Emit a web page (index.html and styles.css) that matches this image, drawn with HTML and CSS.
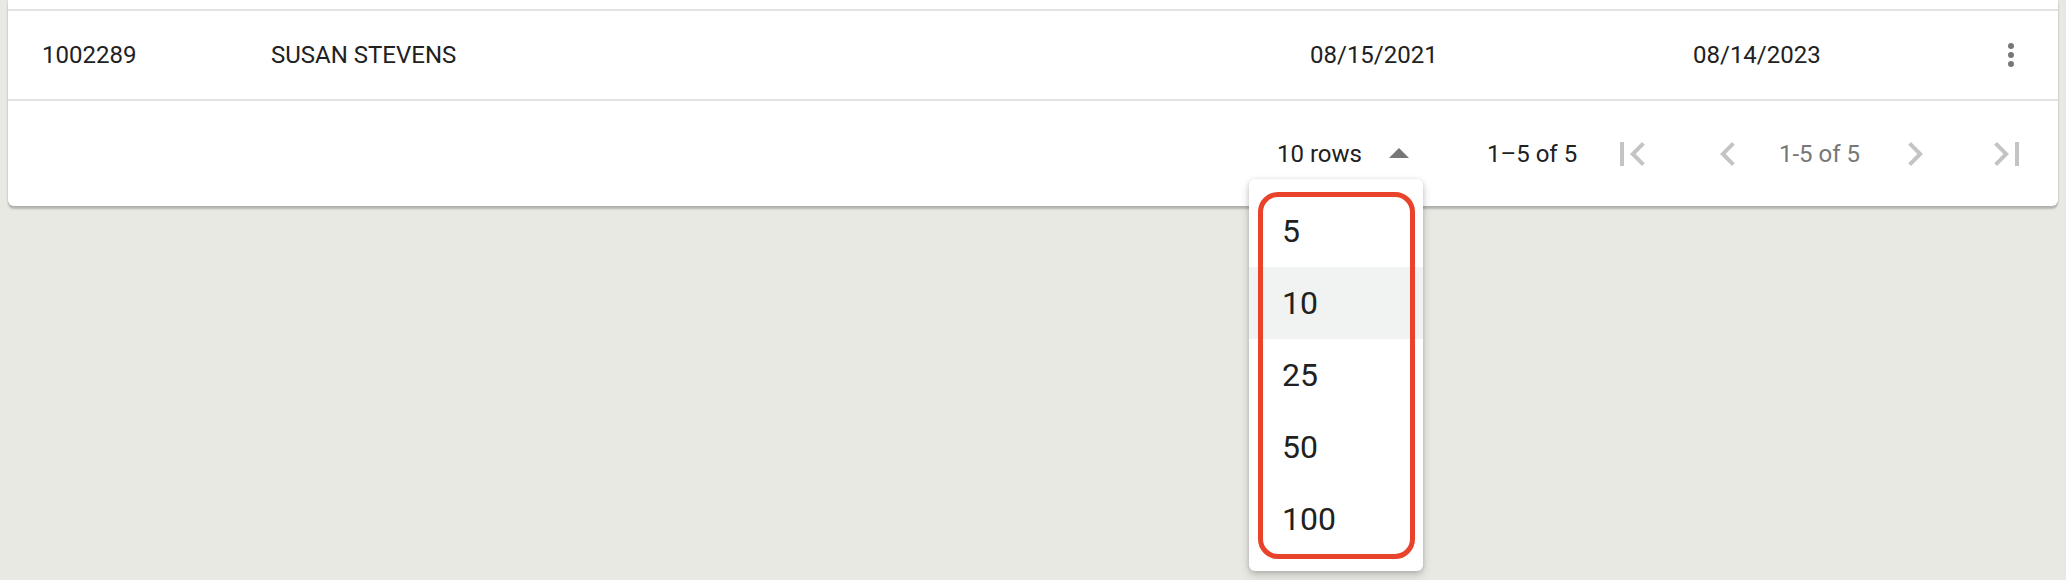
FILE: index.html
```html
<!DOCTYPE html>
<html lang="en">
<head>
<meta charset="utf-8">
<title>Table pagination</title>
<link rel="stylesheet" href="styles.css">
</head>
<body>
<div class="card">
  <div class="row-prev"></div>
  <div class="row">
    <div class="cell">1002289</div>
    <div class="cell">SUSAN STEVENS</div>
    <div class="cell">08/15/2021</div>
    <div class="cell">08/14/2023</div>
    <div class="cell actions">
      <svg class="kebab" viewBox="0 0 24 24" width="36" height="36"><circle cx="12" cy="6" r="2"/><circle cx="12" cy="12" r="2"/><circle cx="12" cy="18" r="2"/></svg>
    </div>
  </div>
  <div class="footer">
    <div class="rows-select">
      <span class="rows-label">10 rows</span>
      <span class="icon-btn">
        <svg class="drop" viewBox="0 0 24 24" width="48" height="48"><path d="M7 14l5-5 5 5z"/></svg>
      </span>
      <div class="menu">
        <div class="menu-item">5</div>
        <div class="menu-item selected">10</div>
        <div class="menu-item">25</div>
        <div class="menu-item">50</div>
        <div class="menu-item">100</div>
        <div class="ring"></div>
      </div>
    </div>
    <span class="range">1–5 of 5</span>
    <span class="icon-btn first">
      <svg class="nav" viewBox="0 0 24 24" width="48" height="48"><path d="M18.41 16.59L13.82 12l4.59-4.59L17 6l-6 6 6 6zM6 6h2v12H6z"/></svg>
    </span>
    <span class="icon-btn prev">
      <svg class="nav" viewBox="0 0 24 24" width="48" height="48"><path d="M15.41 7.41L14 6l-6 6 6 6 1.41-1.41L10.83 12z"/></svg>
    </span>
    <span class="page-text">1-5 of 5</span>
    <span class="icon-btn next">
      <svg class="nav" viewBox="0 0 24 24" width="48" height="48"><path d="M10 6L8.59 7.41 13.17 12l-4.58 4.59L10 18l6-6z"/></svg>
    </span>
    <span class="icon-btn last">
      <svg class="nav" viewBox="0 0 24 24" width="48" height="48"><path d="M5.59 7.41L10.18 12l-4.59 4.59L7 18l6-6-6-6zM16 6h2v12h-2z"/></svg>
    </span>
  </div>
</div>
</body>
</html>
```
FILE: styles.css
```css
html, body {
  margin: 0;
  padding: 0;
}
body {
  background: #e9e9e4;
  font-family: Roboto, "Liberation Sans", Arial, sans-serif;
  color: #212121;
  height: 580px;
  overflow: hidden;
}
.card {
  margin: 0 8px;
  background: #fff;
  border-radius: 0 0 6px 6px;
  box-shadow: 0 3px 2px rgba(0, 0, 0, 0.22), 0 0 2px rgba(0, 0, 0, 0.14);
}
.row-prev {
  height: 9px;
  border-bottom: 2px solid #e2e2e2;
}
.row {
  display: grid;
  grid-template-columns: 229px 1039px 383px 300px 36px;
  padding: 0 29px 0 34px;
  height: 88px;
  align-items: center;
  border-bottom: 2px solid #e2e2e2;
  font-size: 24px;
}
.cell {
  white-space: nowrap;
}
.actions {
  display: flex;
  align-items: center;
}
.kebab {
  fill: #777;
  display: block;
}
.footer {
  height: 105px;
  display: flex;
  align-items: center;
  justify-content: flex-end;
  padding-right: 27px;
  font-size: 24px;
}
.rows-select {
  position: relative;
  display: flex;
  align-items: center;
  gap: 12px;
  margin-right: 64px;
}
.rows-label {
  width: 86px;
  white-space: nowrap;
}
.icon-btn {
  width: 48px;
  height: 48px;
  display: block;
}
.icon-btn svg {
  display: block;
}
.drop {
  fill: #777;
}
.nav {
  fill: #c4c4c4;
}
.range {
  width: 97px;
  white-space: nowrap;
  margin-right: 24px;
}
.first {
  margin-right: 48px;
}
.prev {
  margin-right: 27px;
}
.page-text {
  width: 85px;
  white-space: nowrap;
  color: #777;
  margin-right: 27px;
}
.next {
  margin-right: 44px;
}
.menu {
  position: absolute;
  left: -28px;
  top: 49px;
  width: 174px;
  padding: 16px 0;
  background: #fff;
  border-radius: 6px;
  box-shadow: 0 4px 10px rgba(0, 0, 0, 0.18), 0 1px 4px rgba(0, 0, 0, 0.14);
  z-index: 5;
}
.menu-item {
  height: 72px;
  display: flex;
  align-items: center;
  padding-left: 33px;
  font-size: 32px;
  color: #212121;
}
.menu-item.selected {
  background: #f0f3f2;
}
.ring {
  position: absolute;
  left: 9px;
  top: 13px;
  width: 157px;
  height: 367px;
  box-sizing: border-box;
  border: 5px solid #e9442b;
  border-radius: 20px;
}
```
